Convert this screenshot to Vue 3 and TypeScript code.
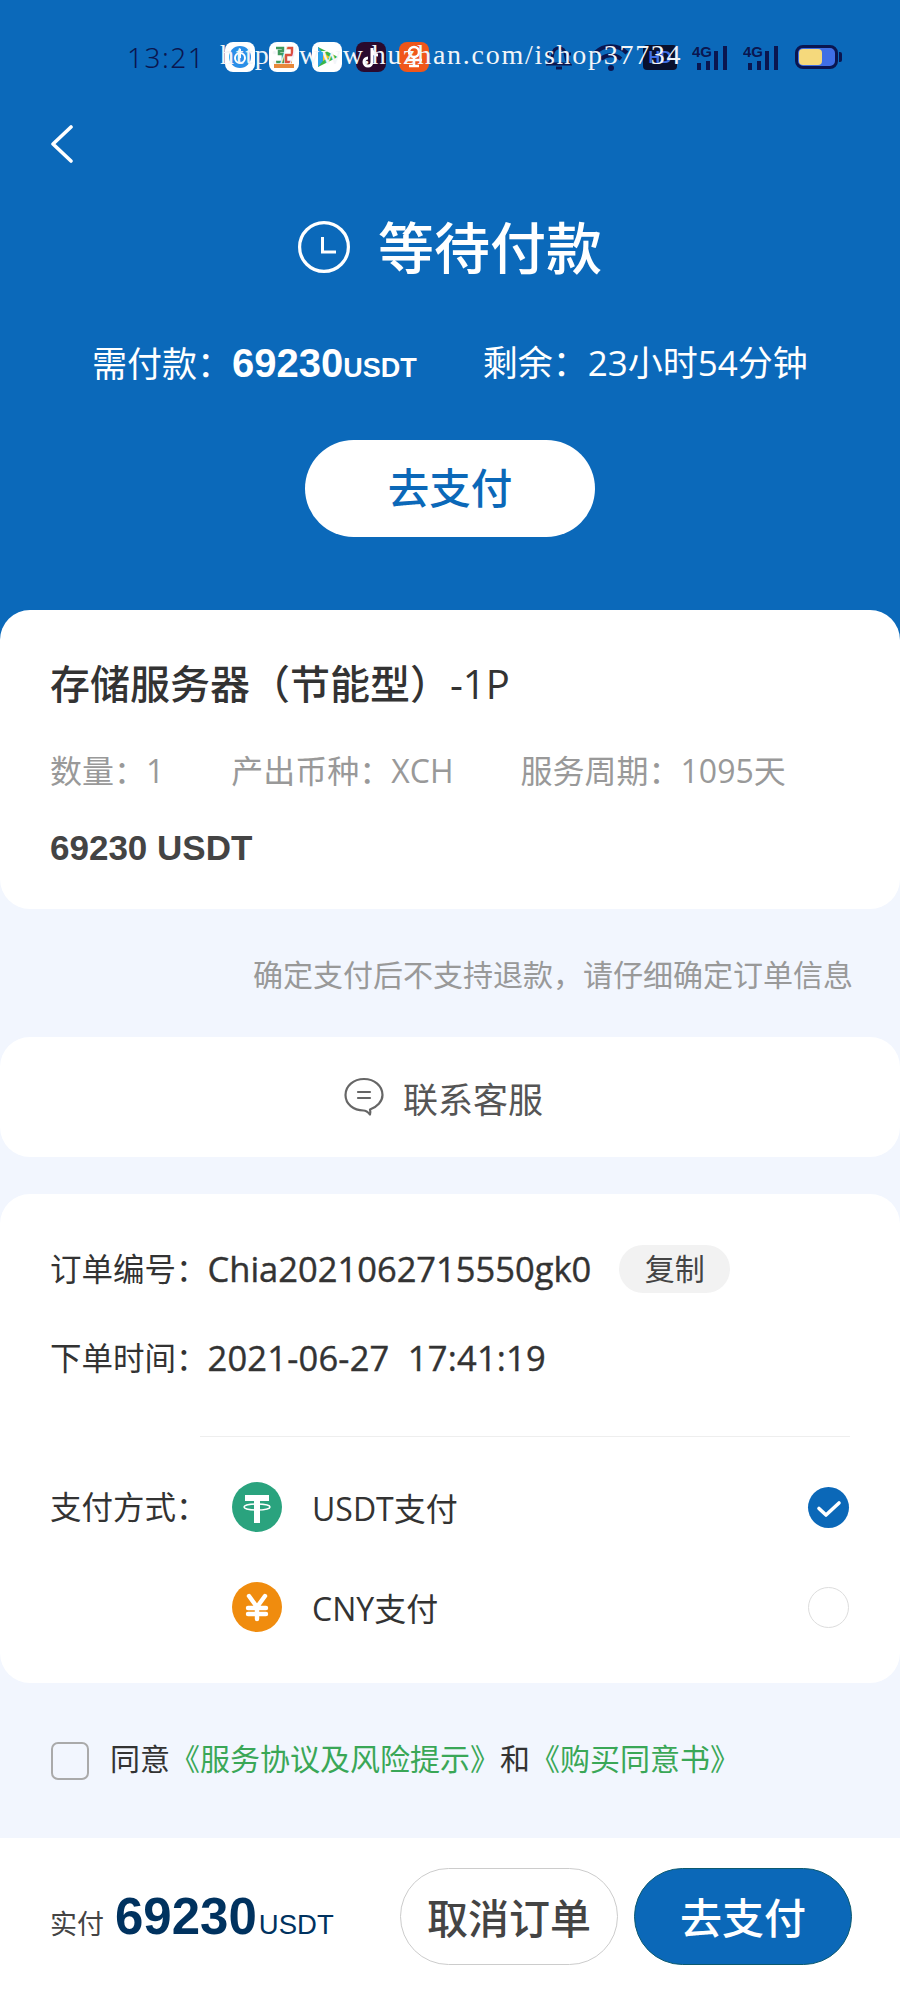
<template>
  <div class="page">
    <header class="hero">
      <div class="status">
        <span class="time">13:21</span>
        <div class="apps">
          <span v-for="app in apps" :key="app.name" class="app" :style="{ background: app.bg }">
            <svg width="30" height="30" viewBox="0 0 30 30" v-html="app.glyph"></svg>
          </span>
        </div>
        <div class="sys">
          <svg class="bell" width="26" height="30" viewBox="0 0 26 30" fill="none" stroke="#0a1650" stroke-width="3">
            <path d="M13 6c4 0 6 3 6.500 7l1 5 3 4H2.500l3-4 1-5C7 9 9 6 13 6z" />
            <path d="M10 26h6" />
            <path d="M1 12h2M23 12h2" />
          </svg>
          <svg class="wifi" width="36" height="30" viewBox="0 0 36 30" fill="none" stroke="#0a1650" stroke-width="4">
            <path d="M2 11c9-9 23-9 32 0M8 17c6-5 14-5 20 0" />
            <circle cx="18" cy="26" r="3" fill="#0a1650" stroke="none" />
          </svg>
          <span class="hd">HD</span>
          <svg v-for="n in 2" :key="n" class="signal" width="36" height="26" viewBox="0 0 36 26">
            <text x="0" y="13" class="tiny">4G</text>
            <rect x="5" y="19" width="4" height="7" fill="#0a1650" />
            <rect x="14" y="17" width="4" height="9" fill="#0a1650" />
            <rect x="22" y="7" width="4" height="19" fill="#0a1650" />
            <rect x="31" y="2" width="4" height="24" fill="#0a1650" />
          </svg>
          <span class="battery"><i class="charge"></i></span>
          <i class="nub"></i>
        </div>
        <span class="mark">http://www.huzhan.com/ishop37734</span>
      </div>

      <button class="back" aria-label="返回">
        <svg width="24" height="38" viewBox="0 0 24 38" fill="none" stroke="#fff" stroke-width="3.6" stroke-linecap="round" stroke-linejoin="round">
          <path d="M21 2L3 19l18 17" />
        </svg>
      </button>

      <div class="title">
        <svg width="52" height="52" viewBox="0 0 52 52" fill="none" stroke="#fff" stroke-width="3.2">
          <circle cx="26" cy="26" r="24.4" />
          <path d="M24.500 16v15H38" stroke-width="3" />
        </svg>
        <h1>等待付款</h1>
      </div>

      <div class="meta">
        <span>需付款：<b class="sum">69230</b><b class="unit">USDT</b></span>
        <span>剩余：23小时54分钟</span>
      </div>

      <button class="go">去支付</button>
    </header>

    <section class="card product">
      <h2>存储服务器（节能型）-1P</h2>
      <div class="specs">
        <span>数量：1</span>
        <span>产出币种：XCH</span>
        <span>服务周期：1095天</span>
      </div>
      <div class="price">69230 USDT</div>
    </section>

    <p class="notice">确定支付后不支持退款，请仔细确定订单信息</p>

    <section class="card contact">
      <svg width="40" height="40" viewBox="0 0 40 40" fill="none" stroke="#666" stroke-width="2.2" stroke-linecap="round" stroke-linejoin="round">
        <path d="M20 2C9.5 2 1.5 9 1.5 18c0 9 8 15.5 18 15.5 1.500 0 4 1 6.500 4 .6-1.400.5-3 0-5 7-2.500 12.500-8 12.500-14.500C38.500 9 30.500 2 20 2z" />
        <path d="M14 15h12M14 21h12" />
      </svg>
      <span>联系客服</span>
    </section>

    <section class="card order">
      <div class="line">
        <span>订单编号：</span><strong>Chia2021062715550gk0</strong>
        <button class="copy">复制</button>
      </div>
      <div class="line second">
        <span>下单时间：</span><strong class="stamp">2021-06-27&nbsp;&nbsp;17:41:19</strong>
      </div>
      <div class="divider"></div>
      <div class="pay">
        <span class="pay-label">支付方式：</span>
        <div class="methods">
          <div class="method">
            <svg width="50" height="50" viewBox="0 0 50 50">
              <circle cx="25" cy="25" r="25" fill="#2aa37e" />
              <path d="M13 13h24v6h-9v22h-6V19h-9z" fill="#fff" />
              <ellipse cx="25" cy="25" rx="13" ry="3" fill="none" stroke="#fff" stroke-width="1.500" />
            </svg>
            <span class="method-name">USDT支付</span>
            <span class="radio on">
              <svg width="41" height="41" viewBox="0 0 41 41" fill="none" stroke="#fff" stroke-width="3.600" stroke-linecap="round" stroke-linejoin="round">
                <path d="M11 21.500l7 6.500 13-12" />
              </svg>
            </span>
          </div>
          <div class="method">
            <svg width="50" height="50" viewBox="0 0 50 50">
              <circle cx="25" cy="25" r="25" fill="#f08c0e" />
              <path d="M17 14l8 11 8-11M16 26h18M16 32h18M25 25v12" fill="none" stroke="#fff" stroke-width="4.400" stroke-linecap="round" stroke-linejoin="round" />
            </svg>
            <span class="method-name">CNY支付</span>
            <span class="radio"></span>
          </div>
        </div>
      </div>
    </section>

    <div class="agree">
      <span class="check"></span>
      <span class="agree-text">同意<a>《服务协议及风险提示》</a>和<a>《购买同意书》</a></span>
    </div>

    <footer class="bar">
      <div class="total">
        <span class="total-label">实付</span>
        <b class="total-sum">69230</b>
        <span class="total-unit">USDT</span>
      </div>
      <button class="btn cancel">取消订单</button>
      <button class="btn primary">去支付</button>
    </footer>
  </div>
</template>

<script setup lang="ts">
interface AppIcon {
  name: string;
  bg: string;
  glyph: string;
}

const apps: AppIcon[] = [
  {
    name: "baidu",
    bg: "#fff",
    glyph: '<circle cx="15" cy="15" r="11" fill="#2a8fe8"/><circle cx="15" cy="16" r="5" fill="none" stroke="#fff" stroke-width="2"/><rect x="14" y="7" width="2" height="9" fill="#fff"/>',
  },
  {
    name: "fifty",
    bg: "#fff",
    glyph: '<path d="M7 6h7v3H10v3h4v8H7" fill="none" stroke="#3f9a5c" stroke-width="2.500"/><path d="M17 6h6v7h-6v7h6" fill="none" stroke="#d9503f" stroke-width="2.500"/><rect x="5" y="22" width="20" height="4" fill="#e8883a"/>',
  },
  {
    name: "video",
    bg: "#fff",
    glyph: '<path d="M6 5l20 10L6 25z" fill="#39b54a"/><path d="M6 5l8 10-8 10z" fill="#2a9fe8"/><path d="M11 11l7 4-7 4z" fill="#f5c518"/>',
  },
  {
    name: "tiktok",
    bg: "#2a0a2e",
    glyph: '<path d="M16 6v14a4 4 0 1 1-4-4M16 8c1 3 3 5 6 5" fill="none" stroke="#fff" stroke-width="3"/>',
  },
  {
    name: "orange",
    bg: "#f0561a",
    glyph: '<circle cx="15" cy="10" r="5" fill="none" stroke="#fff" stroke-width="2.500"/><path d="M7 18h16M10 24h10M15 15v9" fill="none" stroke="#fff" stroke-width="2.500"/>',
  },
];
</script>

<style>
html,
body {
  margin: 0;
  background: #f2f6fe;
}
</style>

<style scoped>
.page {
  display: flex;
  flex-direction: column;
  width: 900px;
  height: 2000px;
  overflow: hidden;
  background: #f2f6fe;
  color: #333;
  font-family: "Open Sans", "Noto Sans CJK SC", sans-serif;
}

button {
  padding: 0;
  border: 0;
  font: inherit;
}

h1,
h2,
p {
  margin: 0;
  font-weight: 400;
}

/* header */
.hero {
  padding-bottom: 103px;
  background: #0b69ba;
  color: #fff;
}

.status {
  position: relative;
  display: flex;
  align-items: center;
  height: 30px;
  padding: 42px 58px 0 127px;
}

.time {
  width: 98px;
  color: #0a1650;
  font-family: "Noto Sans", sans-serif;
  font-size: 28px;
  font-weight: 300;
  letter-spacing: 1.500px;
  line-height: 30px;
}

.apps {
  display: flex;
  gap: 13.500px;
}

.app {
  width: 30px;
  height: 30px;
  border-radius: 8px;
}

.sys {
  display: flex;
  align-items: center;
  margin-left: auto;
}

.wifi {
  margin-left: 21px;
}

.hd {
  width: 34px;
  height: 25px;
  margin-left: 14px;
  border-radius: 4px;
  background: #08102e;
  color: #3f6fe6;
  font: 700 16px/25px "Liberation Sans", sans-serif;
  text-align: center;
}

.signal {
  margin-left: 15px;
}

.tiny {
  fill: #0a1650;
  font: 700 15px "Liberation Sans", sans-serif;
}

.battery {
  display: flex;
  width: 43px;
  height: 24px;
  margin-left: 16px;
  padding: 1px;
  box-sizing: border-box;
  border: 3px solid #0a1650;
  border-radius: 8px;
  background: #3f6fe6;
}

.charge {
  width: 23px;
  border-radius: 4px;
  background: #f5d97c;
}

.nub {
  width: 3px;
  height: 10px;
  margin-left: 1px;
  border-radius: 0 2px 2px 0;
  background: #0a1650;
}

.mark {
  position: absolute;
  top: 39px;
  left: 220px;
  color: #f2f5f8;
  font-family: "Liberation Serif", serif;
  font-size: 28px;
  letter-spacing: 1.720px;
  line-height: 32px;
  white-space: nowrap;
}

.back {
  display: block;
  width: 24px;
  height: 38px;
  margin: 53px 0 0 50px;
  background: none;
}

.back svg,
.title svg {
  display: block;
}

.title {
  display: flex;
  align-items: center;
  justify-content: center;
  gap: 28px;
  height: 60px;
  margin-top: 54px;
}

.title h1 {
  font-size: 56px;
  font-weight: 500;
  line-height: 60px;
}

.meta {
  display: flex;
  gap: 66px;
  height: 50px;
  margin-top: 61px;
  padding-left: 92px;
  font-size: 35px;
  line-height: 50px;
}

.sum,
.unit {
  font-family: "Liberation Sans", sans-serif;
  font-weight: 700;
}

.sum {
  font-size: 40px;
}

.unit {
  font-size: 27px;
}

.go {
  display: block;
  width: 290px;
  height: 97px;
  margin: 52px auto 0;
  padding-bottom: 5px;
  border-radius: 49px;
  background: #fff;
  color: #0b68b8;
  font-size: 41.500px;
  font-weight: 500;
}

/* cards */
.card {
  border-radius: 30px;
  background: #fff;
}

.product {
  margin-top: -30px;
  padding: 46px 50px 39px;
}

.product h2 {
  color: #333;
  font-size: 40px;
  font-weight: 500;
  line-height: 56px;
}

.specs {
  display: flex;
  gap: 67px;
  margin-top: 35px;
  color: #999;
  font-size: 32px;
  line-height: 48px;
}

.price {
  margin-top: 31px;
  color: #444;
  font: 700 35px/44px "Liberation Sans", sans-serif;
}

.notice {
  margin-top: 44px;
  padding-right: 47px;
  color: #999;
  font-size: 30px;
  line-height: 44px;
  text-align: right;
}

.contact {
  display: flex;
  align-items: center;
  justify-content: center;
  gap: 19px;
  height: 120px;
  margin-top: 40px;
  padding-right: 13px;
  color: #555;
  font-size: 35px;
}

.order {
  margin-top: 37px;
  padding: 51px 50px 51px;
  font-size: 31.500px;
}

.line {
  display: flex;
  align-items: center;
  line-height: 48px;
}

.line strong {
  font-size: 34.500px;
  font-weight: 500;
  -webkit-text-stroke: 0.4px #333;
}

.line .stamp {
  letter-spacing: 0.200px;
}

.second {
  margin-top: 41px;
}

.copy {
  width: 111px;
  height: 48px;
  margin-left: 28px;
  border-radius: 24px;
  background: #f2f2f2;
  color: #444;
  font-size: 30px;
}

.divider {
  height: 1px;
  margin: 54px 0 0 150px;
  background: #eee;
}

.pay {
  display: flex;
  margin-top: 45px;
}

.pay-label {
  width: 182px;
  line-height: 50px;
}

.methods {
  display: flex;
  flex: 1;
  flex-direction: column;
  gap: 50px;
}

.method {
  display: flex;
  align-items: center;
  gap: 30px;
  height: 50px;
  padding-right: 1px;
  font-size: 32px;
}

.method-name {
  flex: 1;
}

.radio {
  width: 41px;
  height: 41px;
  box-sizing: border-box;
  border: 1px solid #ddd;
  border-radius: 50%;
}

.radio.on {
  border: 0;
  background: #0b68b8;
}

.agree {
  display: flex;
  align-items: center;
  gap: 21px;
  margin-top: 57px;
  padding-left: 51px;
  color: #333;
  font-size: 30px;
  line-height: 38px;
}

.agree-text {
  padding-bottom: 3px;
}

.agree a {
  color: #3aa757;
}

.check {
  width: 38px;
  height: 38px;
  box-sizing: border-box;
  border: 2px solid #aaa;
  border-radius: 7px;
}

/* bottom bar */
.bar {
  display: flex;
  align-items: center;
  gap: 16px;
  height: 157px;
  margin-top: auto;
  padding: 0 48px 5px 50px;
  background: #fff;
}

.total {
  display: flex;
  flex: 1;
  align-items: baseline;
  font-family: "Liberation Sans", "Noto Sans CJK SC", sans-serif;
}

.total-label {
  color: #444;
  font-size: 27px;
}

.total-sum {
  margin-left: 11px;
  color: #00325f;
  font-size: 51px;
}

.total-unit {
  margin-left: 2px;
  color: #00325f;
  font-size: 27.500px;
}

.btn {
  width: 218px;
  height: 97px;
  padding-bottom: 2px;
  box-sizing: border-box;
  border-radius: 49px;
  font-size: 41px;
}

.cancel {
  border: 1px solid #ccc;
  background: #fff;
  color: #444;
  font-weight: 500;
}

.primary {
  border: 1px solid #0c5a70;
  background: #0b68b8;
  color: #fff;
  font-size: 42px;
  font-weight: 500;
}
</style>
